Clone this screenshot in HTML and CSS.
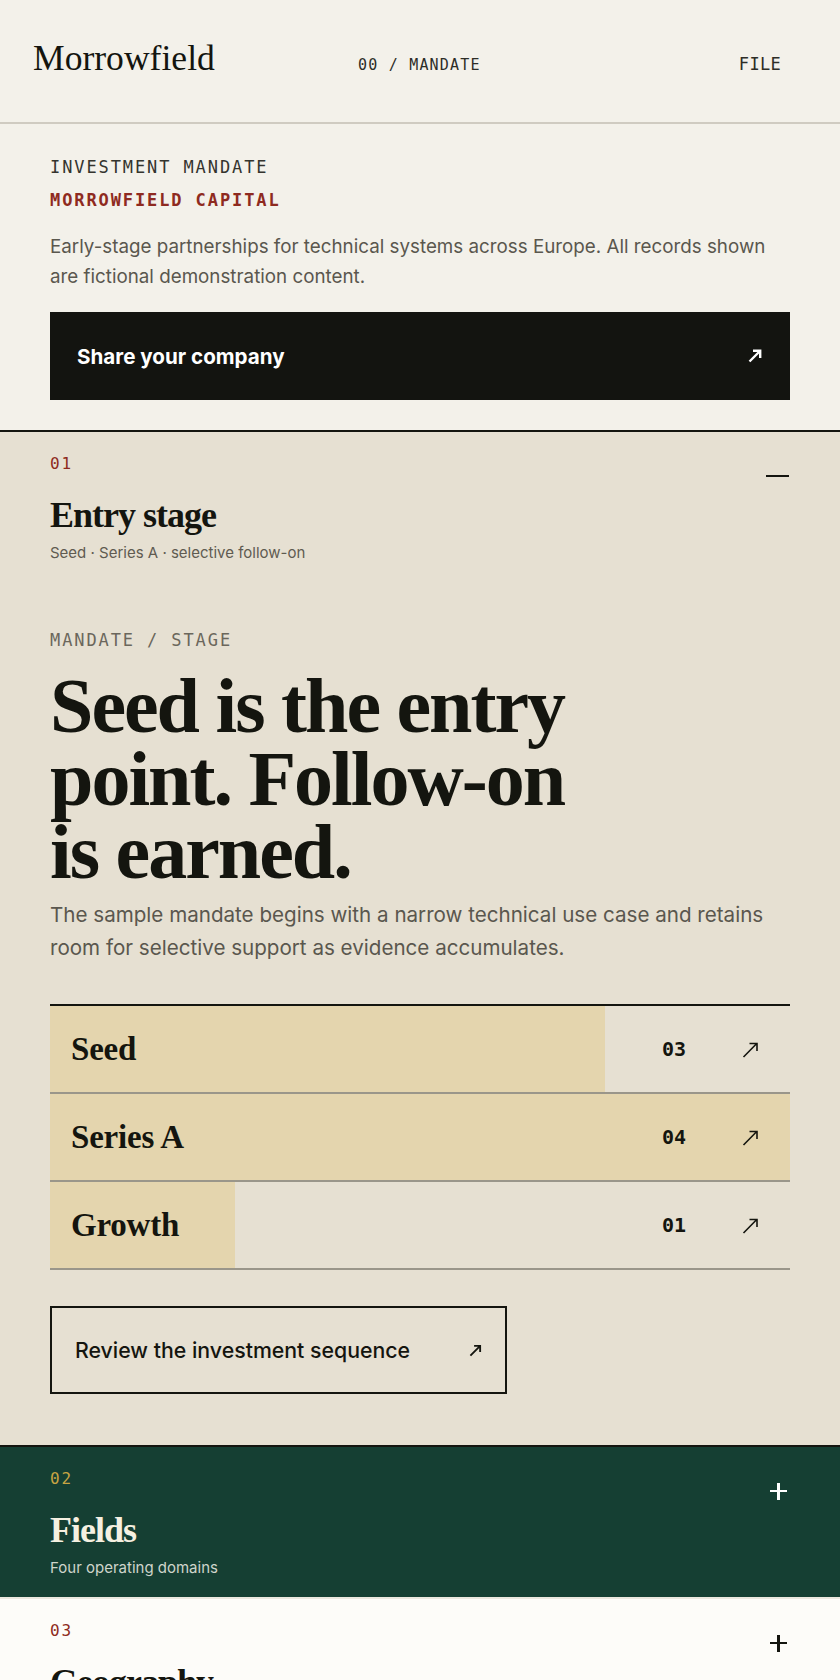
FILE: index.html
```html
<!DOCTYPE html>
<html lang="en">
<head>
<meta charset="utf-8">
<title>Morrowfield — Mandate</title>
<link rel="stylesheet" href="styles.css">
</head>
<body>
<header class="topbar">
  <div class="logo">Morrowfield</div>
  <nav class="crumb">00 / MANDATE</nav>
  <a class="file" href="#">FILE</a>
</header>

<section class="intro">
  <p class="eyebrow">INVESTMENT MANDATE</p>
  <p class="firm">MORROWFIELD CAPITAL</p>
  <p class="lede">Early-stage partnerships for technical systems across Europe. All records shown are fictional demonstration content.</p>
  <a class="cta" href="#">
    <span>Share your company</span>
    <svg class="cta-arrow" viewBox="0 0 14 14" aria-hidden="true"><path d="M1.5 12.5 L12 2 M5 1.8 H12.2 V9"/></svg>
  </a>
</section>

<section class="panel panel-open">
  <div class="panel-head">
    <div class="panel-title">
      <span class="num">01</span>
      <h2>Entry stage</h2>
      <p class="sub">Seed · Series A · selective follow-on</p>
    </div>
    <span class="toggle toggle-minus" aria-hidden="true"></span>
  </div>
  <div class="panel-body">
    <p class="kicker">MANDATE / STAGE</p>
    <h1 class="headline">Seed is the entry point. Follow-on is earned.</h1>
    <p class="body">The sample mandate begins with a narrow technical use case and retains room for selective support as evidence accumulates.</p>
    <ul class="stages">
      <li class="stage" style="--fill:75%">
        <span class="stage-name">Seed</span>
        <span class="stage-count">03</span>
        <svg class="row-arrow" viewBox="0 0 16 17" aria-hidden="true"><path d="M1.5 16 L15 2.2 M7.5 2.5 H15 V10"/></svg>
      </li>
      <li class="stage" style="--fill:100%">
        <span class="stage-name">Series A</span>
        <span class="stage-count">04</span>
        <svg class="row-arrow" viewBox="0 0 16 17" aria-hidden="true"><path d="M1.5 16 L15 2.2 M7.5 2.5 H15 V10"/></svg>
      </li>
      <li class="stage" style="--fill:25%">
        <span class="stage-name">Growth</span>
        <span class="stage-count">01</span>
        <svg class="row-arrow" viewBox="0 0 16 17" aria-hidden="true"><path d="M1.5 16 L15 2.2 M7.5 2.5 H15 V10"/></svg>
      </li>
    </ul>
    <a class="outline-btn" href="#">
      <span>Review the investment sequence</span>
      <svg class="btn-arrow" viewBox="0 0 14 14" aria-hidden="true"><path d="M1.5 12.5 L12 2 M5.5 2 H12 V8.5"/></svg>
    </a>
  </div>
</section>

<section class="panel panel-green">
  <div class="panel-head">
    <div class="panel-title">
      <span class="num">02</span>
      <h2>Fields</h2>
      <p class="sub">Four operating domains</p>
    </div>
    <span class="toggle toggle-plus" aria-hidden="true"></span>
  </div>
</section>

<section class="panel panel-white">
  <div class="panel-head">
    <div class="panel-title">
      <span class="num">03</span>
      <h2>Geography</h2>
      <p class="sub">Europe-first, remote-tolerant</p>
    </div>
    <span class="toggle toggle-plus" aria-hidden="true"></span>
  </div>
</section>
</body>
</html>
```

FILE: styles.css
```css
* { box-sizing: border-box; }

html, body {
  margin: 0;
  padding: 0;
}

body {
  background: #f3f1ea;
  color: #14150f;
  font-family: "Inter", "Liberation Sans", sans-serif;
}

p, h1, h2, ul { margin: 0; padding: 0; }
a { color: inherit; text-decoration: none; }

/* ---------- top bar ---------- */
.topbar {
  display: grid;
  grid-template-columns: 325px 1fr auto;
  align-items: baseline;
  height: 124px;
  padding: 37.5px 59px 0 33px;
  border-bottom: 2px solid #cfcbc1;
}

.logo {
  font-family: "Liberation Serif", serif;
  font-size: 35.6px;
  line-height: 40px;
  color: #14150f;
}

.crumb {
  font-family: "DejaVu Sans Mono", monospace;
  font-size: 15px;
  letter-spacing: 1.2px;
  color: #2d2d27;
}

.file {
  font-family: "DejaVu Sans Mono", monospace;
  font-size: 17px;
  letter-spacing: 0.3px;
  color: #2d2d27;
}

/* ---------- intro ---------- */
.intro {
  padding: 32px 50px 30px;
}

.eyebrow, .firm, .kicker {
  font-family: "DejaVu Sans Mono", monospace;
  font-size: 17px;
  line-height: 22px;
  letter-spacing: 1.9px;
}

.eyebrow { color: #34342e; }

.firm {
  margin-top: 11px;
  font-weight: bold;
  color: #8e2a20;
}

.lede {
  margin-top: 21px;
  font-size: 18.8px;
  line-height: 30px;
  color: #5a574e;
}

.cta {
  margin-top: 20px;
  display: flex;
  align-items: center;
  justify-content: space-between;
  height: 88px;
  padding: 0 28px 0 27px;
  background: #131410;
  color: #ffffff;
  font-size: 20.6px;
  font-weight: 700;
}

.cta-arrow {
  width: 14px;
  height: 14px;
  fill: none;
  stroke: #ffffff;
  stroke-width: 2.4;
}

/* ---------- panels ---------- */
.panel {
  border-top: 2px solid #14150f;
  padding: 21px 50px 18px;
}

.panel-open {
  background: #e6e0d2;
  padding-bottom: 51px;
}

.panel-green {
  background: #153f33;
  color: #f5f0e1;
}

.panel-white {
  background: #fdfcf9;
  border-top: 2px solid #ebe8df;
}

.panel-head {
  display: flex;
  justify-content: space-between;
  align-items: flex-start;
}

.num {
  display: block;
  font-family: "DejaVu Sans Mono", monospace;
  font-size: 16px;
  line-height: 22px;
  letter-spacing: 1.9px;
  color: #8e2a20;
}

.panel-green .num { color: #c8a443; }

.panel-title h2 {
  margin-top: 19px;
  font-family: "Liberation Serif", serif;
  font-size: 36px;
  line-height: 42px;
  font-weight: 700;
  letter-spacing: -1px;
}

.sub {
  margin-top: 6px;
  font-size: 15px;
  line-height: 22px;
  color: #5f5b51;
}

.panel-green .sub { color: #cfd5cb; }

.toggle {
  display: block;
  position: relative;
  width: 24px;
  height: 24px;
  margin-top: 11px;
}

.toggle-minus::before,
.toggle-plus::before,
.toggle-plus::after {
  content: "";
  position: absolute;
  background: #14150f;
}

.toggle-minus::before {
  left: 0;
  right: 1px;
  top: 10.5px;
  height: 2.5px;
}

.toggle-plus::before {
  left: 4px;
  width: 17px;
  top: 10.75px;
  height: 2.5px;
}

.toggle-plus::after {
  left: 11.25px;
  width: 2.5px;
  top: 3.5px;
  height: 17px;
}

.panel-green .toggle-plus::before,
.panel-green .toggle-plus::after { background: #ffffff; }

/* ---------- open panel body ---------- */
.panel-body {
  margin-top: 65px;
}

.kicker { color: #6b675c; }

.headline {
  margin-top: 18px;
  max-width: 560px;
  font-family: "Liberation Serif", serif;
  font-size: 78px;
  line-height: 73px;
  font-weight: 700;
  letter-spacing: -2px;
  color: #14150f;
}

.body {
  margin-top: 10px;
  font-size: 20.6px;
  line-height: 33px;
  color: #5a574e;
}

.stages {
  list-style: none;
  margin-top: 40px;
  border-top: 2px solid #14150f;
}

.stage {
  display: flex;
  align-items: center;
  height: 88px;
  padding: 0 32px 0 21px;
  border-bottom: 2px solid #9a968a;
  background: linear-gradient(to right, #e4d5ae var(--fill), transparent var(--fill));
}

.stage-name {
  flex: 1;
  font-family: "Liberation Serif", serif;
  font-size: 33px;
  font-weight: 700;
  letter-spacing: -0.2px;
  color: #14150f;
}

.stage-count {
  font-family: "DejaVu Sans Mono", monospace;
  font-size: 20px;
  font-weight: 700;
  color: #14150f;
}

.row-arrow {
  width: 16px;
  height: 17px;
  margin-left: 56px;
  fill: none;
  stroke: #14150f;
  stroke-width: 1.6;
}

.outline-btn {
  margin-top: 36px;
  display: inline-flex;
  align-items: center;
  gap: 59px;
  height: 88px;
  padding: 0 23px;
  border: 2px solid #14150f;
  font-size: 21.3px;
  font-weight: 500;
  color: #14150f;
}

.btn-arrow {
  width: 13px;
  height: 13px;
  fill: none;
  stroke: #14150f;
  stroke-width: 2;
}
```
